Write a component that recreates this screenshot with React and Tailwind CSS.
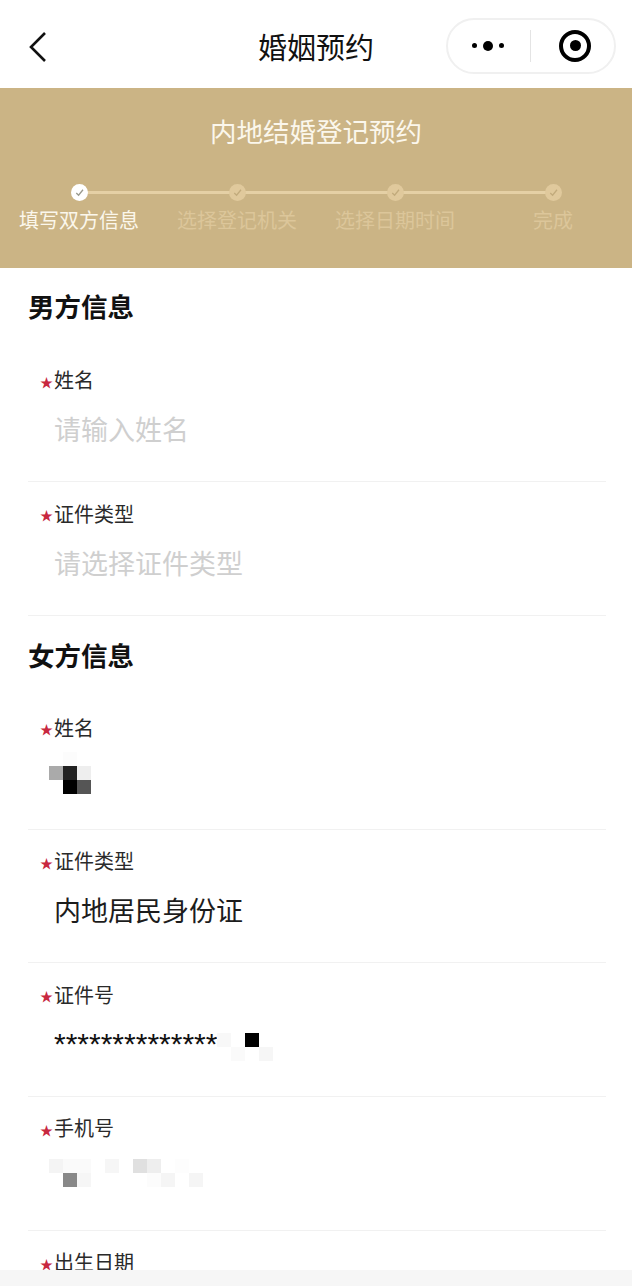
import React from 'react';

const font = "font-['Noto_Sans_CJK_SC','Noto_Sans',sans-serif]";

const CheckDot = ({ active }) => (
    <span className={`z-10 flex h-[17px] w-[17px] items-center justify-center rounded-full ${active ? 'bg-white' : 'bg-[#e0c99c]'}`}>
        <svg width="11" height="11" viewBox="0 0 12 12" fill="none" stroke={active ? '#9a9a8e' : '#c2ab7c'} strokeWidth="1.4">
            <path d="M2.5 6.5 5 9l4.8-6" />
        </svg>
    </span>
);

const steps = [
    { label: '填写双方信息', active: true },
    { label: '选择登记机关' },
    { label: '选择日期时间' },
    { label: '完成' },
];

// pixelated blocks over private values
const Mosaic = ({ rows, className }) => (
    <div className={`flex flex-col ${className}`}>
        {rows.map((row, i) => (
            <div key={i} className="flex">
                {row.map((cell, j) => (
                    <div key={j} className={`h-[14px] w-[14px] shrink-0 ${cell}`}></div>
                ))}
            </div>
        ))}
    </div>
);

const Field = ({ label, children }) => (
    <div className="ml-[28px] mr-[26px] h-[133.6px] border-b border-[#f1f1f1] pl-[12px] pt-[18.5px]">
        <div className="flex h-[26px] items-center text-[20px] leading-[26px] text-[#2a2a2a]">
            <span className="w-[14px] pt-[2px] text-[13px] leading-[13px] text-[#c8283f]">★</span>
            <span>{label}</span>
        </div>
        {children}
    </div>
);

const App = () => {
    return (
        <div className={`relative h-[1286px] w-[632px] overflow-hidden bg-white ${font}`}>
            <div className="grid h-[88px] grid-cols-3 items-center px-[16px] pt-[5px]">
                <svg className="ml-[12px]" width="20" height="32" viewBox="0 0 20 32" fill="none" stroke="#111" strokeWidth="2.6">
                    <path d="M17 2 3 16l14 14" />
                </svg>
                <span className="text-center text-[29px] leading-none text-[#111]">婚姻预约</span>
                <div className="-mt-[2px] flex h-[56px] w-[170px] items-center justify-self-end rounded-full border-2 border-[#f0f0f0] pl-[24px]">
                    <div className="flex items-center gap-[6px]">
                        <span className="h-[5px] w-[5px] rounded-full bg-black"></span>
                        <span className="h-[10px] w-[10px] rounded-full bg-black"></span>
                        <span className="h-[5px] w-[5px] rounded-full bg-black"></span>
                    </div>
                    <span className="ml-[26px] h-[32px] w-px bg-[#e4e4e4]"></span>
                    <span className="ml-[28px] flex h-[32px] w-[32px] items-center justify-center rounded-full border-[4px] border-black">
                        <span className="h-[11px] w-[11px] rounded-full bg-black"></span>
                    </span>
                </div>
            </div>

            <div className="h-[180px] bg-[#cbb485]">
                <p className="pt-[24px] text-center text-[26.5px] leading-[38px] text-[#fbf7ec]">内地结婚登记预约</p>
                <div className="mt-[34px] grid grid-cols-4">
                    {steps.map((step, i) => (
                        <div key={step.label} className="relative flex flex-col items-center">
                            {i < steps.length - 1 && (
                                <span className="absolute left-1/2 top-[7px] h-[3px] w-full bg-[#e5d0a5]"></span>
                            )}
                            <CheckDot active={step.active} />
                            <span className={`mt-[5px] text-[20px] leading-[28px] ${step.active ? 'text-[#fbf7ec]' : 'text-[#dcc69a]'}`}>
                                {step.label}
                            </span>
                        </div>
                    ))}
                </div>
            </div>

            <h2 className="pl-[28px] pt-[19px] text-[26.5px] font-bold leading-[38px] text-[#111]">男方信息</h2>
            <div className="mt-[23.5px]">
                <Field label="姓名">
                    <p className="mt-[18px] pl-[14px] text-[27px] leading-[36px] text-[#cfcfcf]">请输入姓名</p>
                </Field>
                <Field label="证件类型">
                    <p className="mt-[18px] pl-[14px] text-[27px] leading-[36px] text-[#cfcfcf]">请选择证件类型</p>
                </Field>
            </div>

            <h2 className="pl-[28px] pt-[20px] text-[26.5px] font-bold leading-[38px] text-[#111]">女方信息</h2>
            <div className="mt-[22.5px]">
                <Field label="姓名">
                    <Mosaic
                        className="mt-[11.5px] pl-[9px]"
                        rows={[
                            ['', 'bg-[#fcfcfc]'],
                            ['bg-[#aaaaaa]', 'bg-[#222222]', 'bg-[#eeeeee]'],
                            ['', 'bg-[#000000]', 'bg-[#555555]'],
                        ]}
                    />
                </Field>
                <Field label="证件类型">
                    <p className="mt-[18px] pl-[14px] text-[27px] leading-[36px] text-[#1c1c1c]">内地居民身份证</p>
                </Field>
                <Field label="证件号">
                    <div className="relative mt-[19px] h-[36px] pl-[14px]">
                        <span className="block font-['Liberation_Sans',sans-serif] text-[30px] leading-[34px] text-[#111]">**************</span>
                        <Mosaic
                            className="absolute left-[177px] top-[6px]"
                            rows={[
                                ['bg-[#f8f8f8]', '', 'bg-[#000000]'],
                                ['', 'bg-[#fafafa]', '', 'bg-[#f6f6f6]'],
                            ]}
                        />
                    </div>
                </Field>
                <Field label="手机号">
                    <Mosaic
                        className="mt-[18px] pl-[9px]"
                        rows={[
                            ['bg-[#f4f4f4]', 'bg-[#fafafa]', 'bg-[#fafafa]', '', 'bg-[#f6f6f6]', '', 'bg-[#e0e0e0]', 'bg-[#eeeeee]', '', 'bg-[#fdfdfd]'],
                            ['', 'bg-[#888888]', 'bg-[#f6f6f6]', '', '', '', '', 'bg-[#fcfcfc]', 'bg-[#f5f5f5]', '', 'bg-[#f5f5f5]'],
                        ]}
                    />
                </Field>
                <Field label="出生日期" />
            </div>

            <div className="absolute inset-x-0 bottom-0 h-[16px] bg-[#f6f6f6]"></div>
        </div>
    );
};

export default App;
